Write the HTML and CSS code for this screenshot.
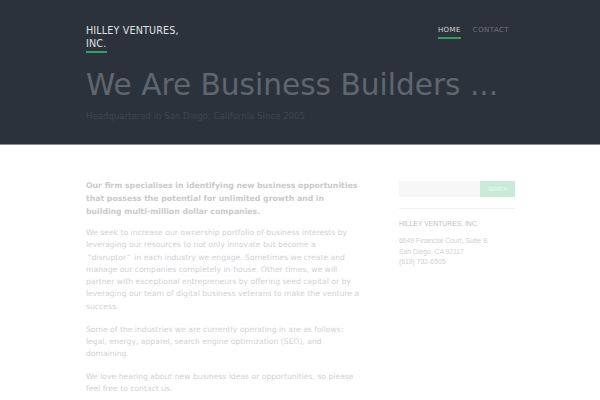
FILE: index.html
```html
<!DOCTYPE html>
<html lang="en">
<head>
<meta charset="utf-8">
<title>Hilley Ventures, Inc.</title>
<link rel="stylesheet" href="styles.css">
</head>
<body>
<header class="masthead">
  <div class="wrap">
    <div class="topbar">
      <a class="logo" href="#">Hilley Ventures, Inc.</a>
      <nav class="nav">
        <a class="nav-link active" href="#">Home</a>
        <a class="nav-link" href="#">Contact</a>
      </nav>
    </div>
    <h1 class="hero-title">We Are Business Builders ...</h1>
    <p class="hero-sub">Headquartered in San Diego, California Since 2005</p>
  </div>
</header>
<div class="wrap content">
  <main class="main">
    <p class="lead">Our firm specialises in identifying new business opportunities that possess the potential for unlimited growth and in building multi-million dollar companies.</p>
    <p>We seek to increase our ownership portfolio of business interests by leveraging our resources to not only innovate but become a <span class="quoted">“disruptor”</span> in each industry we engage. Sometimes we create and manage our companies completely in-house. Other times, we will partner with exceptional entrepreneurs by offering seed capital or by leveraging our team of digital business veterans to make the venture a success.</p>
    <p>Some of the industries we are currently operating in are as follows: legal, energy, apparel, search engine optimization (SEO), and domaining.</p>
    <p>We love hearing about new business ideas or opportunities, so please feel free to contact us.</p>
  </main>
  <aside class="sidebar">
    <form class="search">
      <input class="search-input" type="text" aria-label="Search">
      <button class="search-btn" type="button">Search</button>
    </form>
    <div class="widget">
      <h3 class="widget-title">Hilley Ventures, Inc.</h3>
      <p class="address">6649 Financial Court, Suite B<br>San Diego, CA 92117<br>(619) 732-6505</p>
    </div>
  </aside>
</div>
</body>
</html>
```
FILE: styles.css
```css
* { box-sizing: border-box; }
html, body { margin: 0; padding: 0; background: #fff; }
body { font-family: "DejaVu Sans", Verdana, sans-serif; }

.wrap { width: 430px; margin: 0 auto; padding-left: 1px; }

.masthead {
  background: #2c323b;
  height: 145px;
  border-bottom: 1px solid #8a8e93;
}
.topbar {
  display: flex;
  justify-content: space-between;
  align-items: flex-start;
  padding-top: 24px;
}
.logo {
  display: block;
  width: 110px;
  color: #dfe2e5;
  text-decoration: none;
  text-transform: uppercase;
  font-size: 9.6px;
  line-height: 13px;
  letter-spacing: 0.15px;
}
.logo::after {
  content: "";
  display: block;
  width: 21px;
  height: 2px;
  margin-top: 1px;
  background: #2f9e68;
}
.nav { display: flex; gap: 12px; padding-top: 2px; padding-right: 6px; }
.nav-link {
  color: #6d747c;
  text-decoration: none;
  text-transform: uppercase;
  font-size: 7px;
  letter-spacing: 0.42px;
  line-height: 9px;
  padding-bottom: 2px;
  border-bottom: 2px solid transparent;
}
.nav-link.active { color: #d8dbde; border-bottom-color: #2f9e68; }

.hero-title {
  margin: 14px 0 0;
  font-weight: normal;
  font-size: 29.6px;
  line-height: 36px;
  color: #5e6670;
}
.hero-sub {
  margin: 8px 0 0;
  font-size: 8.6px;
  color: #3e4650;
}

.content {
  display: flex;
  justify-content: space-between;
  padding-top: 34px;
}
.main { width: 275px; font-size: 7.65px; line-height: 12.3px; color: #d0d2d5; }
.main p { margin: 0 0 10.5px; }
.main .quoted { display: inline-block; padding: 0 1.5px; }
.main .lead { width: 273px; font-weight: bold; font-size: 7.75px; line-height: 13px; color: #c8cacd; margin-bottom: 9px; }

.sidebar { width: 116px; font-family: "Liberation Sans", Arial, sans-serif; padding-top: 2px; }
.search {
  display: flex;
  padding-bottom: 11px;
  border-bottom: 1px solid #f2f2f2;
}
.search-input {
  flex: 1;
  min-width: 0;
  height: 16px;
  border: 0;
  background: #f7f7f7;
  padding: 0;
}
.search-btn {
  width: 35px;
  height: 16px;
  border: 0;
  padding: 0;
  background: #c9ead8;
  color: #f1faf5;
  font-family: "Liberation Sans", Arial, sans-serif;
  font-size: 4.5px;
  text-transform: uppercase;
}
.widget-title {
  margin: 11px 0 0;
  font-weight: normal;
  font-size: 6.8px;
  text-transform: uppercase;
  color: #bdbfc2;
}
.address {
  margin: 9px 0 0;
  font-size: 6.8px;
  line-height: 10.6px;
  color: #cfd1d3;
}
```
